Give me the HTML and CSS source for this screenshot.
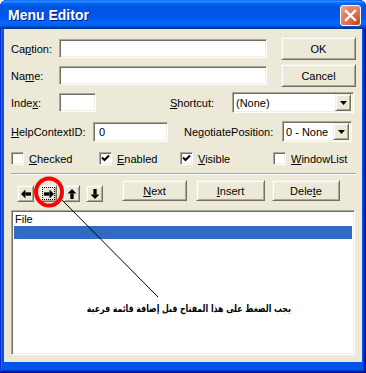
FILE: index.html
```html
<!DOCTYPE html>
<html lang="en">
<head>
<meta charset="utf-8">
<title>Menu Editor</title>
<link rel="stylesheet" href="styles.css">
</head>
<body>
<div class="window">
  <div class="titlebar">
    <span class="title">Menu Editor</span>
    <span class="close">
      <svg width="19" height="19" viewBox="0 0 19 19"><path d="M5 5 L14 14 M14 5 L5 14" stroke="#fff" stroke-width="2.4" stroke-linecap="square"/></svg>
    </span>
  </div>
  <div class="client">
    <div class="row r1">
      <span class="lbl l-cap">Ca<u>p</u>tion:</span>
      <span class="field f-cap"></span>
      <span class="btn b-side">OK</span>
    </div>
    <div class="row r2">
      <span class="lbl l-cap">Na<u>m</u>e:</span>
      <span class="field f-cap"></span>
      <span class="btn b-side">Cancel</span>
    </div>
    <div class="row r3">
      <span class="lbl l-cap">Inde<u>x</u>:</span>
      <span class="field f-idx"></span>
      <span class="lbl l-short"><u>S</u>hortcut:</span>
      <span class="combo c-short"><span class="ctext">(None)</span><span class="dd"><svg width="7" height="4" viewBox="0 0 7 4"><polygon points="0,0 7,0 3.5,4" fill="#000"/></svg></span></span>
    </div>
    <div class="row r4">
      <span class="lbl l-help"><u>H</u>elpContextID:</span>
      <span class="field f-help"><span class="ftext">0</span></span>
      <span class="lbl l-neg">Ne<u>g</u>otiatePosition:</span>
      <span class="combo c-neg"><span class="ctext">0 - None</span><span class="dd"><svg width="7" height="4" viewBox="0 0 7 4"><polygon points="0,0 7,0 3.5,4" fill="#000"/></svg></span></span>
    </div>
    <div class="row r5">
      <span class="chk k1"><span class="box"></span><span><u>C</u>hecked</span></span>
      <span class="chk k2"><span class="box"><svg width="9" height="9" viewBox="0 0 9 9"><polyline points="1,3.5 3.5,6 8,1.5" fill="none" stroke="#000" stroke-width="2"/></svg></span><span><u>E</u>nabled</span></span>
      <span class="chk k3"><span class="box"><svg width="9" height="9" viewBox="0 0 9 9"><polyline points="1,3.5 3.5,6 8,1.5" fill="none" stroke="#000" stroke-width="2"/></svg></span><span><u>V</u>isible</span></span>
      <span class="chk k4"><span class="box"></span><span><u>W</u>indowList</span></span>
    </div>
    <div class="sep"></div>
    <div class="row r6">
      <span class="btn abtn a1"><svg width="9" height="9" viewBox="0 0 9 9"><polygon points="0,4.5 4,0.5 4,8.5" fill="#000"/><rect x="4" y="3" width="5" height="3" fill="#000"/></svg></span>
      <span class="btn abtn a2"><span class="focus"><svg width="9" height="9" viewBox="0 0 9 9"><polygon points="9,4.5 5,0.5 5,8.5" fill="#000"/><rect x="0" y="3" width="5" height="3" fill="#000"/></svg></span></span>
      <span class="btn abtn a3"><svg width="9" height="9" viewBox="0 0 9 9"><polygon points="4.5,0 0.5,4 8.5,4" fill="#000"/><rect x="3" y="4" width="3" height="5" fill="#000"/></svg></span>
      <span class="btn abtn a4"><svg width="9" height="9" viewBox="0 0 9 9"><polygon points="4.5,9 0.5,5 8.5,5" fill="#000"/><rect x="3" y="0" width="3" height="5" fill="#000"/></svg></span>
      <span class="btn b-next"><u>N</u>ext</span>
      <span class="btn b-ins"><u>I</u>nsert</span>
      <span class="btn b-del">Dele<u>t</u>e</span>
    </div>
    <div class="list">
      <div class="item">File</div>
      <div class="item sel"></div>
    </div>
  </div>
  <svg class="annot" width="366" height="373" viewBox="0 0 366 373">
    <line x1="60" y1="198" x2="158" y2="297" stroke="#000" stroke-width="1"/>
    <ellipse cx="49" cy="192" rx="13" ry="13.5" fill="none" stroke="#f00" stroke-width="4"/>
  </svg>
  <div class="note"><span class="note-text" dir="rtl">يجب الضغط على هذا المفتاح قبل إضافة قائمة فرعية</span></div>
</div>
</body>
</html>
```

FILE: styles.css
```css
* { box-sizing: border-box; margin: 0; padding: 0; }
body {
  margin: 0;
  background: #fff;
  font-family: "Liberation Sans", Arial, sans-serif;
  font-size: 11px;
  color: #000;
}
u { text-decoration: underline; text-underline-offset: 1px; }

.window {
  position: relative;
  width: 366px;
  height: 373px;
  display: flex;
  flex-direction: column;
  background: #0055EA;
  border-radius: 7px 7px 0 0;
  overflow: hidden;
  box-shadow: inset -1px -1px #00138C, inset 1px 1px #0831D9, inset -2px -2px #001EA0, inset 2px 2px #166AEE, inset -3px -3px #003BDA, inset 3px 3px #0855DD;
}

.titlebar {
  height: 29px;
  flex: none;
  display: flex;
  align-items: center;
  padding-left: 8px;
  border-radius: 7px 7px 0 0;
  background: linear-gradient(to bottom, #0058EE 0%, #3593FF 4%, #288EFF 6%, #127DFF 8%, #036FFC 10%, #0262EE 14%, #0057E5 20%, #0054E3 24%, #0055EB 56%, #005BF5 66%, #026AFE 76%, #0062EF 86%, #0052D6 92%, #0040AB 94%, #003092 100%);
}
.title {
  font-weight: bold;
  font-size: 14px;
  color: #fff;
  text-shadow: 1px 1px #0A1883;
  margin-top: 1px;
}
.close {
  margin-left: auto;
  margin-right: 5px;
  align-self: flex-start;
  margin-top: 5px;
  width: 21px;
  height: 21px;
  border: 1px solid #fff;
  border-radius: 3px;
  display: flex;
  align-items: center;
  justify-content: center;
  background: radial-gradient(circle at 85% 90%, #CC4614 0%, #DC6548 30%, #E37B5F 60%, #F0A890 100%);
}

.client {
  flex: 1;
  margin: 0 4px 11px 4px;
  background: #ECE9D8;
  padding-left: 7px;
  padding-top: 8px;
  display: flex;
  flex-direction: column;
}

.row { display: flex; align-items: center; flex: none; }
.r1 { height: 23px; }
.r2 { height: 23px; margin-top: 4px; }
.r3 { height: 21px; margin-top: 5px; }
.r4 { height: 21px; margin-top: 8px; }
.r5 { height: 13px; margin-top: 10px; }
.r6 { height: 22px; margin-top: 5px; align-items: stretch; }

.lbl { flex: none; white-space: nowrap; }
.l-cap { width: 48px; }
.l-short { width: 62px; margin-left: 74px; }
.l-help { width: 82px; }
.l-neg { width: 98px; margin-left: 16px; }

.field, .combo {
  flex: none;
  background: #fff;
  border: 1px solid;
  border-color: #ACA899 #fff #fff #ACA899;
  box-shadow: inset 1px 1px #716F64, inset -1px -1px #F1EFE2;
  display: flex;
  align-items: center;
}
.f-cap { width: 208px; height: 19px; }
.f-idx { width: 37px; height: 19px; }
.f-help { width: 75px; height: 20px; }
.ftext { padding-left: 5px; }

.combo { height: 21px; padding: 2px; }
.c-short { width: 122px; }
.c-neg { width: 70px; }
.ctext { flex: 1; padding-left: 1px; white-space: nowrap; overflow: hidden; }
.dd {
  width: 16px;
  height: 17px;
  flex: none;
  background: #ECE9D8;
  border: 1px solid;
  border-color: #F1EFE2 #716F64 #716F64 #F1EFE2;
  box-shadow: inset 1px 1px #fff, inset -1px -1px #ACA899;
  display: flex;
  align-items: center;
  justify-content: center;
}

.btn {
  flex: none;
  background: #ECE9D8;
  border: 1px solid;
  border-color: #F1EFE2 #716F64 #716F64 #F1EFE2;
  box-shadow: inset 1px 1px #fff, inset -1px -1px #ACA899;
  display: flex;
  align-items: center;
  justify-content: center;
  white-space: nowrap;
}
.b-side { width: 75px; height: 23px; margin-left: 14px; }

.chk { display: flex; align-items: center; gap: 5px; flex: none; white-space: nowrap; }
.k1 { width: 88px; }
.k2 { width: 81px; }
.k3 { width: 93px; }
.box {
  width: 13px;
  height: 13px;
  background: #fff;
  border: 1px solid;
  border-color: #ACA899 #fff #fff #ACA899;
  box-shadow: inset 1px 1px #716F64, inset -1px -1px #F1EFE2;
  display: flex;
  align-items: center;
  justify-content: center;
}

.sep {
  flex: none;
  margin-top: 8px;
  width: 345px;
  height: 2px;
  border-top: 1px solid #ACA899;
  border-bottom: 1px solid #fff;
}

.abtn { width: 17px; height: 17px; align-self: flex-end; }
.abtn svg { width: 10px; height: 10px; }
.a1 { margin-left: 6px; }
.a2, .a3, .a4 { margin-left: 6px; }
.focus {
  width: 13px;
  height: 13px;
  border: 1px dotted #000;
  display: flex;
  align-items: center;
  justify-content: center;
}
.b-next { width: 65px; height: 21px; margin-left: 19px; align-self: flex-start; }
.b-ins { width: 69px; height: 21px; margin-left: 9px; align-self: flex-start; }
.b-del { width: 68px; height: 21px; margin-left: 7px; align-self: flex-start; }

.list {
  flex: none;
  margin-top: 8px;
  width: 344px;
  height: 145px;
  background: #fff;
  border: 1px solid;
  border-color: #ACA899 #fff #fff #ACA899;
  box-shadow: inset 1px 1px #716F64, inset -1px -1px #F1EFE2;
  padding: 2px;
}
.item { height: 13px; line-height: 13px; padding-left: 1px; }
.sel { background: #316AC5; }

.annot { position: absolute; left: 0; top: 0; pointer-events: none; }
.note {
  position: absolute;
  left: 86px;
  top: 301px;
  width: 206px;
  height: 16px;
  background: #fff;
  display: flex;
  justify-content: center;
  align-items: center;
}
.note-text {
  display: inline-block;
  font-family: "DejaVu Sans", sans-serif;
  font-size: 10px;
  font-weight: bold;
  line-height: 16px;
  white-space: nowrap;
  transform: scaleX(0.78);
}
```
